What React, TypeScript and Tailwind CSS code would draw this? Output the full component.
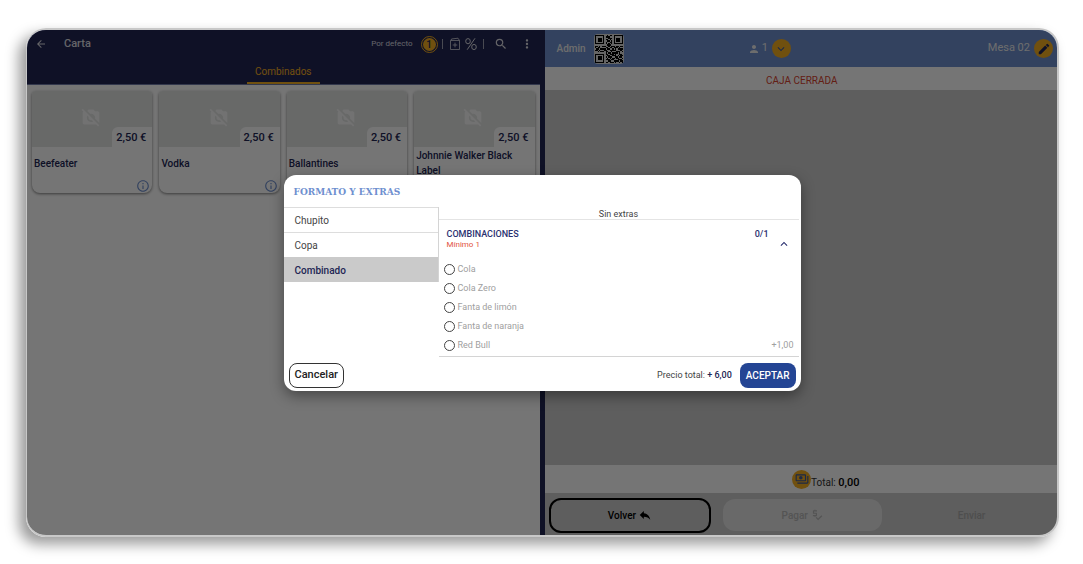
import React from "react";
import {
  MdArrowBack,
  MdEdit,
  MdInfoOutline,
  MdKeyboardArrowDown,
  MdKeyboardArrowUp,
  MdMoreVert,
  MdNoPhotography,
  MdOutlinePayments,
  MdPerson,
  MdPriceCheck,
  MdReply,
  MdSearch,
} from "react-icons/md";

const products = ["Beefeater", "Vodka", "Ballantines", "Johnnie Walker Black Label"];

const formats = ["Chupito", "Copa", "Combinado"];

const mixers = [
  { name: "Cola", extra: "" },
  { name: "Cola Zero", extra: "" },
  { name: "Fanta de limón", extra: "" },
  { name: "Fanta de naranja", extra: "" },
  { name: "Red Bull", extra: "+1,00" },
];

const qrRows = [
  "111111100101101111111",
  "100000101110001000001",
  "101110100011101011101",
  "101110101101001011101",
  "101110100110101011101",
  "100000101001101000001",
  "111111101010101111111",
  "000000000111000000000",
  "110101110010111011011",
  "101100001101101110100",
  "011011110110010101111",
  "110100011001111100010",
  "001011101100100011101",
  "000000001011011110100",
  "111111101101110100110",
  "100000100110011101011",
  "101110101011100110110",
  "101110100101011011001",
  "101110101110110001110",
  "100000100011001111011",
  "111111101101110100101",
];

function QrCode() {
  return (
    <svg viewBox="0 0 21 21" className="size-7" shapeRendering="crispEdges" role="img" aria-label="QR">
      {qrRows.map((row, y) =>
        row.split("").map((cell, x) =>
          cell === "1" ? <rect key={`${x}-${y}`} x={x} y={y} width="1" height="1" fill="#000" /> : null,
        ),
      )}
    </svg>
  );
}

function AddNoteIcon() {
  return (
    <svg viewBox="0 0 12 14" className="h-3.5 w-3" fill="none" stroke="currentColor" strokeWidth="0.8">
      <path d="M1.5 3.5h9v9h-9zM2 3.5l.5-1.500 6.500-.8 1.500 2.300M6 5.700v4.600M3.700 8h4.600" />
    </svg>
  );
}

function PercentIcon() {
  return (
    <svg viewBox="0 0 12 14" className="h-3.5 w-3" fill="none" stroke="currentColor" strokeWidth="1">
      <ellipse cx="3" cy="4.2" rx="2.3" ry="2.6" />
      <ellipse cx="9" cy="10" rx="2.3" ry="2.6" />
      <path d="M10 1.3 2.200 12.700" />
    </svg>
  );
}

function ProductCard({ name }: { name: string }) {
  return (
    <article className="flex h-[102px] flex-col overflow-hidden rounded-b-lg rounded-t-sm bg-white shadow-[0_1px_3px_rgba(0,0,0,0.5)]">
      <div className="flex h-14 shrink-0 justify-center bg-[#e2e4e3] pt-4 pr-0.5">
        <MdNoPhotography className="size-5 text-[#f8f8f8]" />
      </div>
      <div className="-mt-5 ml-auto flex h-5 shrink-0 items-center rounded-tl-md bg-white pt-0.5 pr-1.5 pl-1 text-[11px] font-medium text-[#222654]">
        2,50 €
      </div>
      <div className="flex h-8 shrink-0 items-center px-0.5 text-[10px] leading-[15px] font-medium text-[#222654]">
        {name}
      </div>
      <button type="button" aria-label={`Información de ${name}`} className="ml-auto px-0.5">
        <MdInfoOutline className="size-3.5 text-[#6f90cf]" />
      </button>
    </article>
  );
}

function MenuPane() {
  return (
    <section className="flex min-w-0 flex-1 flex-col border-r-5 border-[#222654] bg-white">
      <header className="border-b border-[#6f7ba8] bg-[#222654] text-[#dcdce2]">
        <div className="flex h-7 items-center pl-2">
          <button type="button" aria-label="Atrás">
            <MdArrowBack className="size-3" />
          </button>
          <h1 className="ml-[17px] text-[11px] font-medium">Carta</h1>
          <div className="ml-auto flex items-center">
            <span className="text-[8px]">Por defecto</span>
            <span className="ml-2 flex size-[17px] items-center justify-center rounded-full border border-[#f5ae22] p-px">
              <span className="flex size-[13px] items-center justify-center rounded-full bg-[#f5ae22] text-[10px] font-medium text-[#222654]">
                1
              </span>
            </span>
            <span className="mx-1 h-2.5 w-px bg-[#a0a2b4]" />
            <button type="button" aria-label="Añadir nota" className="ml-0.5">
              <AddNoteIcon />
            </button>
            <button type="button" aria-label="Descuento" className="ml-1">
              <PercentIcon />
            </button>
            <span className="mx-1.5 h-2.5 w-px bg-[#a0a2b4]" />
            <button type="button" aria-label="Buscar" className="ml-1">
              <MdSearch className="size-3.5" />
            </button>
            <button type="button" aria-label="Más opciones" className="mr-1.5 ml-3">
              <MdMoreVert className="size-3.5" />
            </button>
          </div>
        </div>
        <nav className="flex h-[26px] justify-center">
          <a
            href="#combinados"
            className="flex items-center border-b-2 border-[#f5ae22] px-2 pt-0.5 text-[10px] text-[#f5ae22]"
          >
            Combinados
          </a>
        </nav>
      </header>
      <div className="grid grid-cols-4 gap-[7px] px-[5px] py-1.5">
        {products.map((name) => (
          <ProductCard key={name} name={name} />
        ))}
      </div>
    </section>
  );
}

function OrderPane() {
  return (
    <section className="flex min-w-0 flex-1 flex-col bg-[#cccccc]">
      <header className="grid h-[37px] grid-cols-[2fr_2fr_3fr] items-center bg-[#6f90cf] pr-1 pl-3 text-[11px] text-[#eeeeee]">
        <div className="flex items-center gap-2">
          <span className="text-[10px] font-medium">Admin</span>
          <span className="rounded-sm bg-[#dddddd] p-px">
            <QrCode />
          </span>
        </div>
        <div className="flex items-center justify-center gap-0.5">
          <MdPerson className="size-3" />
          <span>1</span>
          <button
            type="button"
            aria-label="Comensales"
            className="ml-0.5 flex size-[19px] items-center justify-center rounded-full bg-[#f5ae22] text-[#3d5a9a]"
          >
            <MdKeyboardArrowDown className="size-3.5" />
          </button>
        </div>
        <div className="flex items-center justify-end gap-1">
          <span>Mesa 02</span>
          <button
            type="button"
            aria-label="Editar mesa"
            className="flex size-[19px] items-center justify-center rounded-full bg-[#f5ae22] text-[#222654]"
          >
            <MdEdit className="size-3.5" />
          </button>
        </div>
      </header>
      <div className="flex h-[23px] items-center justify-center bg-white pt-1 pl-0.5 text-[10px] text-[#d8442f]">
        CAJA CERRADA
      </div>
      <div className="flex-1" />
      <div className="flex h-7 items-center justify-center bg-white pl-[50px] text-[11px] text-[#333333]">
        <span className="flex size-[19px] items-center justify-center rounded-full bg-[#f5ae22] text-[#3d5a9a]">
          <MdOutlinePayments className="size-3.5" />
        </span>
        <span className="pt-2 text-[10px]">
          Total: <strong className="text-[11px] font-medium text-black">0,00</strong>
        </span>
      </div>
      <footer className="grid h-[42px] grid-cols-3 items-center gap-2 px-1 pt-0.5 text-[10px] font-medium">
        <button
          type="button"
          className="flex h-[35px] items-center justify-center gap-0.5 rounded-xl border-2 border-black text-black"
        >
          Volver
          <MdReply className="size-3.5" />
        </button>
        <button
          type="button"
          disabled
          className="ml-1 flex h-8 items-center justify-center gap-0.5 rounded-xl bg-[#e4e4e4] text-[#b8b8b8]"
        >
          Pagar
          <MdPriceCheck className="size-3.5" />
        </button>
        <button type="button" disabled className="flex h-8 items-center justify-center text-[#aaaaaa]">
          Enviar
        </button>
      </footer>
    </section>
  );
}

function ExtrasDialog() {
  return (
    <div
      role="dialog"
      aria-labelledby="dialog-title"
      className="flex w-[517px] max-w-full flex-col overflow-hidden rounded-xl bg-white text-[#444444] shadow-[0_5px_14px_rgba(0,0,0,0.4)]"
    >
      <div className="flex">
        <div className="w-[155px] shrink-0">
          <h2
            id="dialog-title"
            className="flex h-8 items-center pl-2.5 font-['DejaVu_Serif_Condensed','DejaVu_Serif',serif] text-[10px] font-bold whitespace-nowrap text-[#6f90cf]"
          >
            FORMATO Y EXTRAS
          </h2>
          <ul className="border-r border-[#d4d4d4] text-[10px]">
            {formats.map((format) => (
              <li key={format}>
                <button
                  type="button"
                  className={
                    format === "Combinado"
                      ? "flex h-[25px] w-full items-center border-t border-[#cacaca] bg-[#cacaca] pl-[11px] font-medium text-[#222654]"
                      : "flex h-[25px] w-full items-center border-t border-[#dddddd] pl-[11px]"
                  }
                >
                  {format}
                </button>
              </li>
            ))}
          </ul>
        </div>
        <div className="mr-0.5 flex-1 border-b border-[#d4d4d4]">
          <p className="h-[45px] border-b border-[#e4e4e4] pt-[33px] text-center text-[9px] leading-3">Sin extras</p>
          <fieldset className="px-1 pb-px" aria-labelledby="group-title">
            <div className="flex h-10 pt-2 pl-1 text-[9px] font-medium text-[#2b3170]">
              <div>
                <p id="group-title" className="leading-3">
                  COMBINACIONES
                </p>
                <p className="text-[8px] leading-[10px] font-normal text-[#e2513c]">Mínimo 1</p>
              </div>
              <span className="ml-auto leading-3">0/1</span>
              <button type="button" aria-label="Contraer" className="mr-1 ml-2 flex items-center">
                <MdKeyboardArrowUp className="size-3.5" />
              </button>
            </div>
            {mixers.map((mixer) => (
              <label key={mixer.name} className="flex h-[19px] items-center text-[9px] text-[#a0a0a0]">
                <input
                  type="radio"
                  name="combinacion"
                  className="mr-[3px] ml-px size-[11px] appearance-none rounded-full border border-[#444444]"
                />
                {mixer.name}
                <span className="mr-px ml-auto">{mixer.extra}</span>
              </label>
            ))}
          </fieldset>
        </div>
      </div>
      <div className="flex items-center px-[5px] pt-1.5 pb-[3px]">
        <button
          type="button"
          className="h-[25px] rounded-lg border border-[#333333] px-[5px] text-[11px] font-medium text-[#222222]"
        >
          Cancelar
        </button>
        <p className="mr-2 ml-auto text-[9px]">
          Precio total: <strong className="font-medium text-[#222654]">+ 6,00</strong>
        </p>
        <button type="button" className="h-[25px] rounded-lg bg-[#244594] px-1.5 text-[10px] font-medium text-white">
          ACEPTAR
        </button>
      </div>
    </div>
  );
}

export default function App() {
  return (
    <main className="flex min-h-screen bg-white pt-7 pr-6 pb-[27px] pl-[26px] font-[Roboto,sans-serif]">
      <div className="relative flex flex-1 overflow-hidden rounded-[20px] border-2 border-l-1 border-[#c8c8c8] shadow-[-7px_7px_14px_rgba(0,0,0,0.4)]">
        <MenuPane />
        <OrderPane />
        <div className="absolute inset-0 flex items-center justify-center bg-black/54 pt-px">
          <ExtrasDialog />
        </div>
      </div>
    </main>
  );
}
